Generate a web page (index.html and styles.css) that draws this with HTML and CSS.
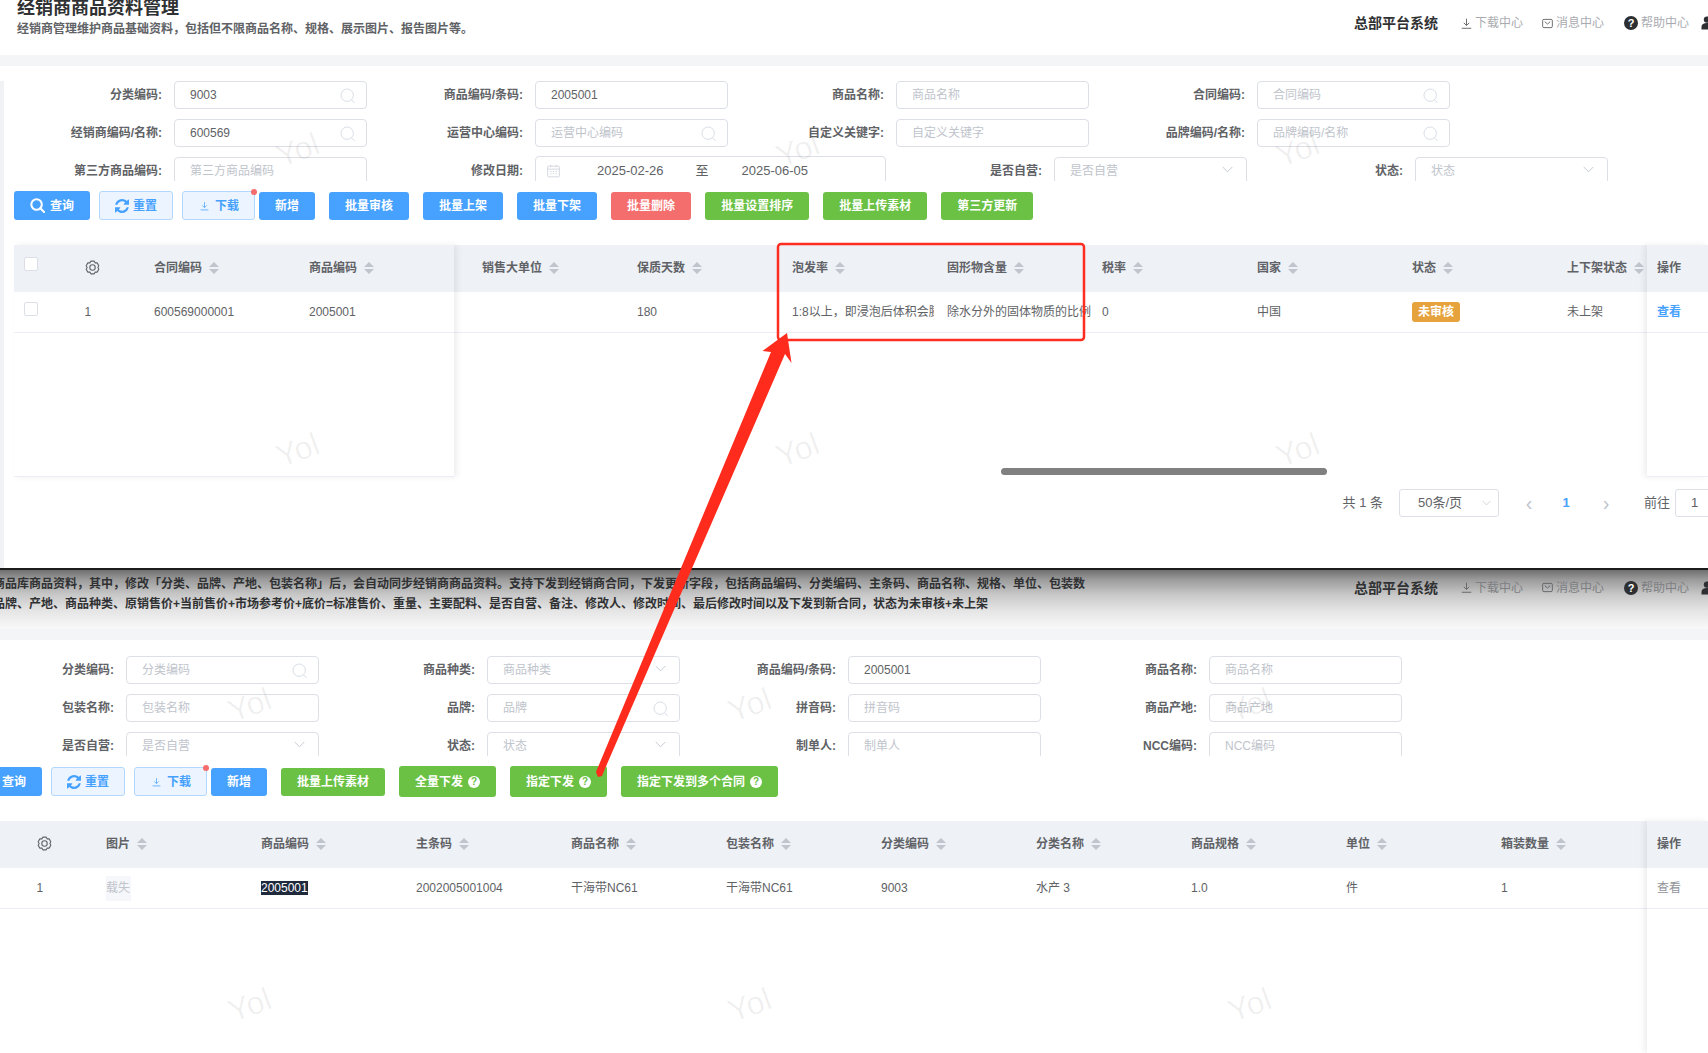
FILE: index.html
```html
<!DOCTYPE html>
<html lang="zh">
<head>
<meta charset="utf-8">
<title>经销商商品资料管理</title>
<link rel="stylesheet" href="styles.css">
</head>
<body>
<svg class="sprite" width="0" height="0">
  <symbol id="i-search" viewBox="0 0 16 16"><circle cx="7.2" cy="7.2" r="6.2" fill="none" stroke="currentColor"/><path d="M11.6 11.8 14.6 15" fill="none" stroke="currentColor"/></symbol>
  <symbol id="i-search-bold" viewBox="0 0 16 16"><circle cx="7" cy="7" r="5.6" fill="none" stroke="currentColor" stroke-width="2.2"/><path d="M11 11 15 15" fill="none" stroke="currentColor" stroke-width="2.2" stroke-linecap="round"/></symbol>
  <symbol id="i-chevron" viewBox="0 0 12 7"><path d="M.8.8 6 6 11.2.8" fill="none" stroke="currentColor"/></symbol>
  <symbol id="i-refresh" viewBox="0 0 1536 1536"><path fill="currentColor" d="M1511 928q0 5-1 7-64 268-268 434.5t-478 166.5q-146 0-282.5-55t-243.5-157l-129 129q-19 19-45 19t-45-19-19-45v-448q0-26 19-45t45-19h448q26 0 45 19t19 45-19 45l-137 137q71 66 161 102t187 36q134 0 250-65t186-179q11-17 53-117 8-23 30-23h192q13 0 22.5 9.5t9.5 22.5zm25-800v448q0 26-19 45t-45 19h-448q-26 0-45-19t-19-45 19-45l138-138q-148-137-349-137-134 0-250 65t-186 179q-11 17-53 117-8 23-30 23h-199q-13 0-22.5-9.5t-9.5-22.5v-7q65-268 270-434.5t480-166.5q146 0 284 55.5t245 156.5l130-129q19-19 45-19t45 19 19 45z"/></symbol>
  <symbol id="i-download" viewBox="0 0 12 12"><path d="M6 .8V8M3 5.2 6 8.2 9 5.2M.8 11.2h10.4" fill="none" stroke="currentColor"/></symbol>
  <symbol id="i-mail" viewBox="0 0 12 12"><rect x=".7" y="1.5" width="10.6" height="9" rx="1.4" fill="none" stroke="currentColor"/><path d="M3 4 6 6.6 9 4" fill="none" stroke="currentColor"/></symbol>
  <symbol id="i-user" viewBox="0 0 12 14"><circle cx="6" cy="3.6" r="3.2" fill="currentColor"/><path d="M.5 13.5V11c0-2.6 2-4 5.5-4s5.500 1.400 5.500 4v2.500z" fill="currentColor"/></symbol>
  <symbol id="i-calendar" viewBox="0 0 14 14"><rect x=".7" y="1.800" width="12.600" height="11.500" rx="1" fill="none" stroke="currentColor"/><path d="M.7 5h12.600M4 .5v2.500M10 .5v2.500M3.500 7.500h1.500M6.300 7.500h1.500M9.100 7.500h1.500M3.500 10h1.500M6.300 10h1.500M9.100 10h1.500" fill="none" stroke="currentColor"/></symbol>
  <symbol id="i-gear" viewBox="0 0 16 16"><path d="M6.190 1.240H9.810L10.850 3.060 12.950 3.050 14.760 6.190 13.700 8 14.760 9.810 12.950 12.950 10.850 12.940 9.810 14.760H6.190L5.150 12.940 3.050 12.950 1.240 9.810 2.300 8 1.240 6.190 3.050 3.050 5.150 3.060Z" fill="none" stroke="currentColor" stroke-width="1.150" stroke-linejoin="round"/><circle cx="8" cy="8" r="2.900" fill="none" stroke="currentColor" stroke-width="1.150"/></symbol>
</svg>

<div class="page">
  <section class="shot shot-a">
    <header class="topbar">
      <div class="intro">
        <h1 class="title">经销商商品资料管理</h1>
        <p class="subtitle">经销商管理维护商品基础资料，包括但不限商品名称、规格、展示图片、报告图片等。</p>
      </div>
      <div class="nav">
        <strong class="nav-system">总部平台系统</strong>
        <span class="nav-item nav-down"><svg class="nav-icon"><use href="#i-download"/></svg>下载中心</span>
        <span class="nav-item nav-msg"><svg class="nav-icon"><use href="#i-mail"/></svg>消息中心</span>
        <span class="nav-item nav-help"><span class="help-dot">?</span>帮助中心</span>
        <svg class="nav-user"><use href="#i-user"/></svg>
      </div>
    </header>
    <div class="band"></div>
    <main class="panel">
      <div class="form">
        <div class="form-row">
          <label class="field"><span class="field-label">分类编码:</span><span class="input"><span class="val">9003</span><svg class="ic-search"><use href="#i-search"/></svg></span></label>
          <label class="field"><span class="field-label">商品编码/条码:</span><span class="input"><span class="val">2005001</span></span></label>
          <label class="field"><span class="field-label">商品名称:</span><span class="input"><span class="ph">商品名称</span></span></label>
          <label class="field"><span class="field-label">合同编码:</span><span class="input"><span class="ph">合同编码</span><svg class="ic-search"><use href="#i-search"/></svg></span></label>
        </div>
        <div class="form-row">
          <label class="field"><span class="field-label">经销商编码/名称:</span><span class="input"><span class="val">600569</span><svg class="ic-search"><use href="#i-search"/></svg></span></label>
          <label class="field"><span class="field-label">运营中心编码:</span><span class="input"><span class="ph">运营中心编码</span><svg class="ic-search"><use href="#i-search"/></svg></span></label>
          <label class="field"><span class="field-label">自定义关键字:</span><span class="input"><span class="ph">自定义关键字</span></span></label>
          <label class="field"><span class="field-label">品牌编码/名称:</span><span class="input"><span class="ph">品牌编码/名称</span><svg class="ic-search"><use href="#i-search"/></svg></span></label>
        </div>
        <div class="form-row">
          <label class="field"><span class="field-label">第三方商品编码:</span><span class="input"><span class="ph">第三方商品编码</span></span></label>
          <label class="field"><span class="field-label">修改日期:</span><span class="input input-date"><svg class="ic-cal"><use href="#i-calendar"/></svg><span class="date-a">2025-02-26</span><span class="date-to">至</span><span class="date-b">2025-06-05</span></span></label>
          <label class="field"><span class="field-label">是否自营:</span><span class="input"><span class="ph">是否自营</span><svg class="ic-chev"><use href="#i-chevron"/></svg></span></label>
          <label class="field"><span class="field-label">状态:</span><span class="input"><span class="ph">状态</span><svg class="ic-chev"><use href="#i-chevron"/></svg></span></label>
        </div>
      </div>
      <div class="toolbar">
        <div class="tb-left">
          <div class="tb-main">
            <button class="btn btn-blue btn-tall"><svg class="ic-query"><use href="#i-search-bold"/></svg>查询</button>
            <button class="btn btn-plain btn-tall"><svg class="ic-refresh"><use href="#i-refresh"/></svg>重置</button>
            <button class="btn btn-plain btn-tall btn-down"><svg class="ic-dl"><use href="#i-download"/></svg>下载<i class="dot"></i></button>
          </div>
          <button class="btn btn-blue">新增</button>
        </div>
        <button class="btn btn-blue">批量审核</button>
        <button class="btn btn-blue">批量上架</button>
        <button class="btn btn-blue">批量下架</button>
        <button class="btn btn-red">批量删除</button>
        <button class="btn btn-green">批量设置排序</button>
        <button class="btn btn-green">批量上传素材</button>
        <button class="btn btn-green">第三方更新</button>
      </div>
      <div class="table">
        <div class="fixed-left">
          <div class="thead">
            <div class="c-check"><i class="check"></i></div>
            <div class="c-index"><svg class="ic-gear"><use href="#i-gear"/></svg></div>
            <div class="cell">合同编码<i class="sort"></i></div>
            <div class="cell">商品编码<i class="sort"></i></div>
          </div>
          <div class="tr">
            <div class="c-check"><i class="check check-row"></i></div>
            <div class="c-index">1</div>
            <div class="cell">600569000001</div>
            <div class="cell">2005001</div>
          </div>
        </div>
        <div class="mid mid-a">
          <div class="thead">
            <div class="cell">销售大单位<i class="sort"></i></div>
            <div class="cell">保质天数<i class="sort"></i></div>
            <div class="cell">泡发率<i class="sort"></i></div>
            <div class="cell">固形物含量<i class="sort"></i></div>
            <div class="cell">税率<i class="sort"></i></div>
            <div class="cell">国家<i class="sort"></i></div>
            <div class="cell">状态<i class="sort"></i></div>
            <div class="cell">上下架状态<i class="sort"></i></div>
          </div>
          <div class="tr">
            <div class="cell"></div>
            <div class="cell">180</div>
            <div class="cell"><span class="clip">1:8以上，即浸泡后体积会膨胀</span></div>
            <div class="cell cell-over">除水分外的固体物质的比例</div>
            <div class="cell">0</div>
            <div class="cell">中国</div>
            <div class="cell"><span class="tag">未审核</span></div>
            <div class="cell">未上架</div>
          </div>
          <div class="scrollbar"></div>
        </div>
        <div class="fixed-right fixed-right-a">
          <div class="thead"><div class="c-op">操作</div></div>
          <div class="tr"><div class="c-op"><span class="link">查看</span></div></div>
        </div>
      </div>
      <div class="pager">
        <span class="pg-total">共 1 条</span>
        <span class="pg-size">50条/页<svg class="ic-chev-sm"><use href="#i-chevron"/></svg></span>
        <span class="pg-arrow pg-prev">‹</span>
        <span class="pg-num">1</span>
        <span class="pg-arrow pg-next">›</span>
        <span class="pg-goto">前往</span>
        <span class="pg-input">1</span>
      </div>
    </main>
    <div class="wm-layer" aria-hidden="true"><span class="wm">Yol</span><span class="wm">Yol</span><span class="wm">Yol</span><span class="wm">Yol</span><span class="wm">Yol</span><span class="wm">Yol</span></div>
  </section>

  <div class="divider"></div>

  <section class="shot shot-b">
    <header class="topbar topbar-b">
      <div class="intro intro-b">
        <p class="desc">商品库商品资料，其中，修改「分类、品牌、产地、包装名称」后，会自动同步经销商商品资料。支持下发到经销商合同，下发更新字段，包括商品编码、分类编码、主条码、商品名称、规格、单位、包装数</p>
        <p class="desc">品牌、产地、商品种类、原销售价+当前售价+市场参考价+底价=标准售价、重量、主要配料、是否自营、备注、修改人、修改时间、最后修改时间以及下发到新合同，状态为未审核+未上架</p>
      </div>
      <div class="nav">
        <strong class="nav-system">总部平台系统</strong>
        <span class="nav-item nav-down"><svg class="nav-icon"><use href="#i-download"/></svg>下载中心</span>
        <span class="nav-item nav-msg"><svg class="nav-icon"><use href="#i-mail"/></svg>消息中心</span>
        <span class="nav-item nav-help"><span class="help-dot">?</span>帮助中心</span>
        <svg class="nav-user"><use href="#i-user"/></svg>
      </div>
    </header>
    <div class="band"></div>
    <main class="panel panel-b">
      <div class="form">
        <div class="form-row">
          <label class="field"><span class="field-label">分类编码:</span><span class="input"><span class="ph">分类编码</span><svg class="ic-search"><use href="#i-search"/></svg></span></label>
          <label class="field"><span class="field-label">商品种类:</span><span class="input"><span class="ph">商品种类</span><svg class="ic-chev"><use href="#i-chevron"/></svg></span></label>
          <label class="field"><span class="field-label">商品编码/条码:</span><span class="input"><span class="val">2005001</span></span></label>
          <label class="field"><span class="field-label">商品名称:</span><span class="input"><span class="ph">商品名称</span></span></label>
        </div>
        <div class="form-row">
          <label class="field"><span class="field-label">包装名称:</span><span class="input"><span class="ph">包装名称</span></span></label>
          <label class="field"><span class="field-label">品牌:</span><span class="input"><span class="ph">品牌</span><svg class="ic-search"><use href="#i-search"/></svg></span></label>
          <label class="field"><span class="field-label">拼音码:</span><span class="input"><span class="ph">拼音码</span></span></label>
          <label class="field"><span class="field-label">商品产地:</span><span class="input"><span class="ph">商品产地</span></span></label>
        </div>
        <div class="form-row">
          <label class="field"><span class="field-label">是否自营:</span><span class="input"><span class="ph">是否自营</span><svg class="ic-chev"><use href="#i-chevron"/></svg></span></label>
          <label class="field"><span class="field-label">状态:</span><span class="input"><span class="ph">状态</span><svg class="ic-chev"><use href="#i-chevron"/></svg></span></label>
          <label class="field"><span class="field-label">制单人:</span><span class="input"><span class="ph">制单人</span></span></label>
          <label class="field"><span class="field-label">NCC编码:</span><span class="input"><span class="ph">NCC编码</span></span></label>
        </div>
      </div>
      <div class="toolbar toolbar-b">
        <div class="tb-left">
          <div class="tb-main">
            <button class="btn btn-blue btn-tall"><svg class="ic-query"><use href="#i-search-bold"/></svg>查询</button>
            <button class="btn btn-plain btn-tall"><svg class="ic-refresh"><use href="#i-refresh"/></svg>重置</button>
            <button class="btn btn-plain btn-tall btn-down"><svg class="ic-dl"><use href="#i-download"/></svg>下载<i class="dot"></i></button>
          </div>
          <button class="btn btn-blue">新增</button>
        </div>
        <button class="btn btn-green">批量上传素材</button>
        <button class="btn btn-green btn-help">全量下发<span class="q">?</span></button>
        <button class="btn btn-green btn-help">指定下发<span class="q">?</span></button>
        <button class="btn btn-green btn-help">指定下发到多个合同<span class="q">?</span></button>
      </div>
      <div class="table table-b">
        <div class="mid">
          <div class="thead">
            <div class="c-check"></div>
            <div class="c-index"><svg class="ic-gear"><use href="#i-gear"/></svg></div>
            <div class="cell">图片<i class="sort"></i></div>
            <div class="cell">商品编码<i class="sort"></i></div>
            <div class="cell">主条码<i class="sort"></i></div>
            <div class="cell">商品名称<i class="sort"></i></div>
            <div class="cell">包装名称<i class="sort"></i></div>
            <div class="cell">分类编码<i class="sort"></i></div>
            <div class="cell">分类名称<i class="sort"></i></div>
            <div class="cell">商品规格<i class="sort"></i></div>
            <div class="cell">单位<i class="sort"></i></div>
            <div class="cell">箱装数量<i class="sort"></i></div>
          </div>
          <div class="tr">
            <div class="c-check"></div>
            <div class="c-index">1</div>
            <div class="cell"><span class="img-fail">载失</span></div>
            <div class="cell"><span class="selected">2005001</span></div>
            <div class="cell">2002005001004</div>
            <div class="cell">干海带NC61</div>
            <div class="cell">干海带NC61</div>
            <div class="cell">9003</div>
            <div class="cell">水产 3</div>
            <div class="cell">1.0</div>
            <div class="cell">件</div>
            <div class="cell">1</div>
          </div>
        </div>
        <div class="fixed-right">
          <div class="thead"><div class="c-op">操作</div></div>
          <div class="tr"><div class="c-op"><span class="link link-gray">查看</span></div></div>
        </div>
      </div>
    </main>
    <div class="wm-layer" aria-hidden="true"><span class="wm">Yol</span><span class="wm">Yol</span><span class="wm">Yol</span><span class="wm">Yol</span><span class="wm">Yol</span><span class="wm">Yol</span></div>
  </section>

  <svg class="annotation" viewBox="0 0 1708 1053" width="1708" height="1053">
    <rect class="anno-box" x="778" y="244" width="306" height="96" rx="3"/>
    <path class="anno-arrow" d="M787 333 791.500 363 785 354 604 771 602 776 598 777 596 772 771 352 762.500 351Z"/>
  </svg>
</div>
</body>
</html>
```

FILE: styles.css
```css
* { box-sizing: border-box; }
html, body { margin: 0; padding: 0; background: #fff; }
body {
  font-family: "Liberation Sans", "Noto Sans CJK SC", sans-serif;
  font-size: 12px;
  line-height: 16px;
  color: #606266;
}
.sprite { position: absolute; }
.page { position: relative; width: 1708px; height: 1053px; overflow: hidden; background: #fff; }

.shot { position: relative; overflow: hidden; }
.shot-a { height: 568px; }
.shot-b { height: 483px; }
.divider { height: 2px; background: #1c1c1c; }

/* header */
.topbar { display: flex; justify-content: space-between; height: 55px; background: #fff; }
.topbar-b { height: 59px; background: linear-gradient(#6f6f6f 0, #9c9c9c 10px, #c6c6c6 24px, #e4e4e4 40px, #f8f8f8 58px); }
.intro { padding-left: 17px; }
.title { margin: -2px 0 0; font-size: 18px; line-height: 20px; font-weight: 700; color: #303133; white-space: nowrap; }
.subtitle { margin: 1px 0 0; font-size: 12px; line-height: 20px; font-weight: 700; color: #606266; white-space: nowrap; }
.intro-b { padding: 4px 0 0; margin-left: -7px; }
.desc { margin: 0; font-size: 12px; line-height: 20px; font-weight: 700; color: #303133; white-space: nowrap; }

.nav { display: flex; align-items: center; width: 354px; height: 46px; flex: none; overflow: hidden; color: #a9abb0; }
.topbar-b .nav { height: 35px; color: #7d7f83; }
.nav-system { width: 84px; font-size: 14px; line-height: 20px; color: #303133; white-space: nowrap; }
.nav-item { display: flex; align-items: center; white-space: nowrap; font-size: 12px; }
.nav-down { margin-left: 23px; }
.nav-msg { margin-left: 19px; }
.nav-help { margin-left: 20px; }
.nav-icon { width: 11px; height: 11px; margin-right: 3px; color: #606266; }
.help-dot { width: 14px; height: 14px; margin-right: 3px; border-radius: 50%; background: #2d2f33; color: #fff; font-size: 11px; font-weight: 700; line-height: 14px; text-align: center; }
.nav-user { width: 12px; height: 14px; margin-left: 12px; flex: none; color: #2d2f33; }

.band { height: 11px; background: #f4f5f7; }
.panel { height: 502px; border-left: 4px solid #f1f2f5; background: #fff; }
.panel-b { height: 413px; margin-left: -48px; }

/* form */
.form { height: 100px; margin-top: 15px; padding-left: 9px; overflow: hidden; display: flex; flex-direction: column; gap: 10px; }
.panel-b .form { margin-top: 16px; }
.form-row { display: flex; gap: 7px; flex: none; }
.field { display: flex; align-items: center; gap: 12px; height: 28px; }
.field-label { width: 149px; text-align: right; font-weight: 700; color: #606266; white-space: nowrap; }
.input { display: flex; align-items: center; justify-content: space-between; width: 193px; height: 28px; padding: 0 10px 0 15px; border: 1px solid #dcdfe6; border-radius: 4px; background: #fff; }
.input-date { width: 351px; height: 30px; justify-content: flex-start; padding: 0 0 0 11px; font-size: 13px; }
.val { color: #606266; }
.ph { color: #c0c4cc; white-space: nowrap; }
.ic-search { width: 16px; height: 16px; color: #d9dee7; margin-top: 2px; }
.ic-chev { width: 11px; height: 7px; color: #c0c4cc; margin: -3px 3px 0 0; }
.ic-cal { width: 13px; height: 14px; color: #d0d4dc; flex: none; }
.date-a { margin-left: 37px; }
.date-to { margin-left: 32px; }
.date-b { margin-left: 33px; }

/* toolbar */
.toolbar { display: flex; align-items: center; gap: 14px; margin-top: 10px; padding-left: 10px; height: 29px; }
.toolbar-b { height: 31px; }
.tb-left { display: flex; align-items: center; gap: 4px; }
.tb-main { display: flex; align-items: center; gap: 9px; }
.btn { position: relative; display: inline-flex; align-items: center; justify-content: center; height: 28px; padding: 0 16px; border: 0; border-radius: 3px; font: 700 12px/16px "Liberation Sans", "Noto Sans CJK SC", sans-serif; color: #fff; white-space: nowrap; }
.btn-tall { height: 29px; }
.btn-help { height: 31px; gap: 5px; }
.btn-blue { background: #46a1ff; }
.btn-green { background: #6ac144; }
.btn-red { background: #f56e6e; }
.btn-plain { background: #ecf5ff; border: 1px solid #b3d8ff; color: #46a1ff; padding: 0 15px; }
.ic-query { width: 15px; height: 15px; margin-right: 5px; }
.ic-refresh { width: 14px; height: 14px; margin-right: 4px; }
.ic-dl { width: 9px; height: 10px; margin: 0 6px 0 2px; }
.dot { position: absolute; top: -3px; right: -3px; width: 6px; height: 6px; border-radius: 50%; background: #f56c6c; }
.q { width: 12px; height: 12px; border-radius: 50%; background: #fff; color: #6ac144; font-size: 10px; font-weight: 700; line-height: 12px; text-align: center; }

/* table */
.table { display: flex; height: 232px; margin: 25px 0 0 10px; }
.table-b { height: 232px; margin-top: 24px; }
.thead { display: flex; height: 47px; padding-bottom: 2px; align-items: center; background: #eef1f6; font-weight: 700; color: #606266; }
.tr { display: flex; height: 41px; align-items: center; border-bottom: 1px solid #ebeef5; color: #606266; }
.fixed-left { position: relative; z-index: 2; flex: none; width: 440px; border-bottom: 1px solid #ebeef5; background: #fff; box-shadow: 3px 0 6px rgba(0, 0, 0, .07); }
.mid { position: relative; flex: 1; min-width: 0; overflow: hidden; background: #fff; }
.mid-a .thead, .mid-a .tr { padding-left: 18px; }
.fixed-right { position: relative; z-index: 2; flex: none; width: 61px; background: #fff; box-shadow: -3px 0 6px rgba(0, 0, 0, .07); }
.fixed-right-a { border-bottom: 1px solid #ebeef5; }
.c-check { flex: none; width: 61px; padding-left: 10px; align-self: flex-start; }
.c-index { flex: none; width: 69px; padding-left: 9.5px; display: flex; align-items: center; }
.c-op { padding-left: 10px; white-space: nowrap; }
.cell { flex: none; display: flex; align-items: center; width: 155px; padding: 0 10px; white-space: nowrap; }
.cell-over { overflow: visible; }
.clip { display: block; flex: none; width: 142px; overflow: hidden; }
.check { display: block; width: 14px; height: 14px; margin-top: 12px; border: 1px solid #dcdfe6; border-radius: 2px; background: #fff; }
.check-row { margin-top: 10px; }
.ic-gear { width: 15px; height: 15px; color: #606266; }
.sort { position: relative; display: block; flex: none; width: 10px; height: 12px; margin-left: 7px; }
.sort::before, .sort::after { content: ""; position: absolute; left: 0; border-left: 5px solid transparent; border-right: 5px solid transparent; }
.sort::before { top: 0; border-bottom: 5px solid #c0c4cc; }
.sort::after { bottom: 0; border-top: 5px solid #c0c4cc; }
.tag { display: block; width: 48px; height: 20px; border-radius: 3px; background: #e6a23c; color: #fff; font-weight: 700; line-height: 20px; text-align: center; }
.link { color: #46a1ff; font-weight: 700; }
.link-gray { color: #909399; font-weight: 400; }
.scrollbar { position: absolute; left: 547px; top: 223px; width: 326px; height: 7px; border-radius: 4px; background: #808080; }
.img-fail { display: block; width: 25px; height: 25px; background: #f5f7fa; color: #c0c4cc; line-height: 25px; overflow: hidden; white-space: nowrap; }
.selected { background: #1f2a3c; color: #fff; line-height: 14px; }

/* pager */
.pager { display: flex; align-items: center; justify-content: flex-end; height: 28px; margin: 12px -17px 0 0; font-size: 13px; color: #606266; }
.pg-total { white-space: nowrap; }
.pg-size { display: flex; align-items: center; justify-content: space-between; width: 100px; height: 28px; margin-left: 16px; padding: 0 7px 0 18px; border: 1px solid #dcdfe6; border-radius: 3px; }
.ic-chev-sm { width: 9px; height: 6px; color: #c0c4cc; }
.pg-arrow { width: 12px; text-align: center; font-size: 20px; line-height: 20px; color: #c0c4cc; }
.pg-prev { margin-left: 24px; }
.pg-num { margin-left: 27.5px; width: 8px; color: #46a1ff; font-weight: 700; }
.pg-next { margin-left: 29.5px; }
.pg-goto { margin-left: 32px; }
.pg-input { width: 50px; height: 28px; margin-left: 5px; border: 1px solid #dcdfe6; border-radius: 3px; padding-left: 15px; line-height: 26px; }

/* watermark */
.wm-layer { position: absolute; left: 48px; top: 0; display: grid; grid-template-columns: repeat(3, 500px); grid-template-rows: repeat(2, 300px); place-items: center; pointer-events: none; z-index: 3; }
.shot-b .wm-layer { left: 0; top: -15px; }
.wm { font-size: 32px; line-height: 36px; color: rgba(0, 0, 0, .06); transform: rotate(-20deg); }

/* annotation */
.annotation { position: absolute; left: 0; top: 0; z-index: 5; pointer-events: none; }
.anno-box { fill: none; stroke: #ff2d20; stroke-width: 2.5; }
.anno-arrow { fill: #ff2b1c; }
```
